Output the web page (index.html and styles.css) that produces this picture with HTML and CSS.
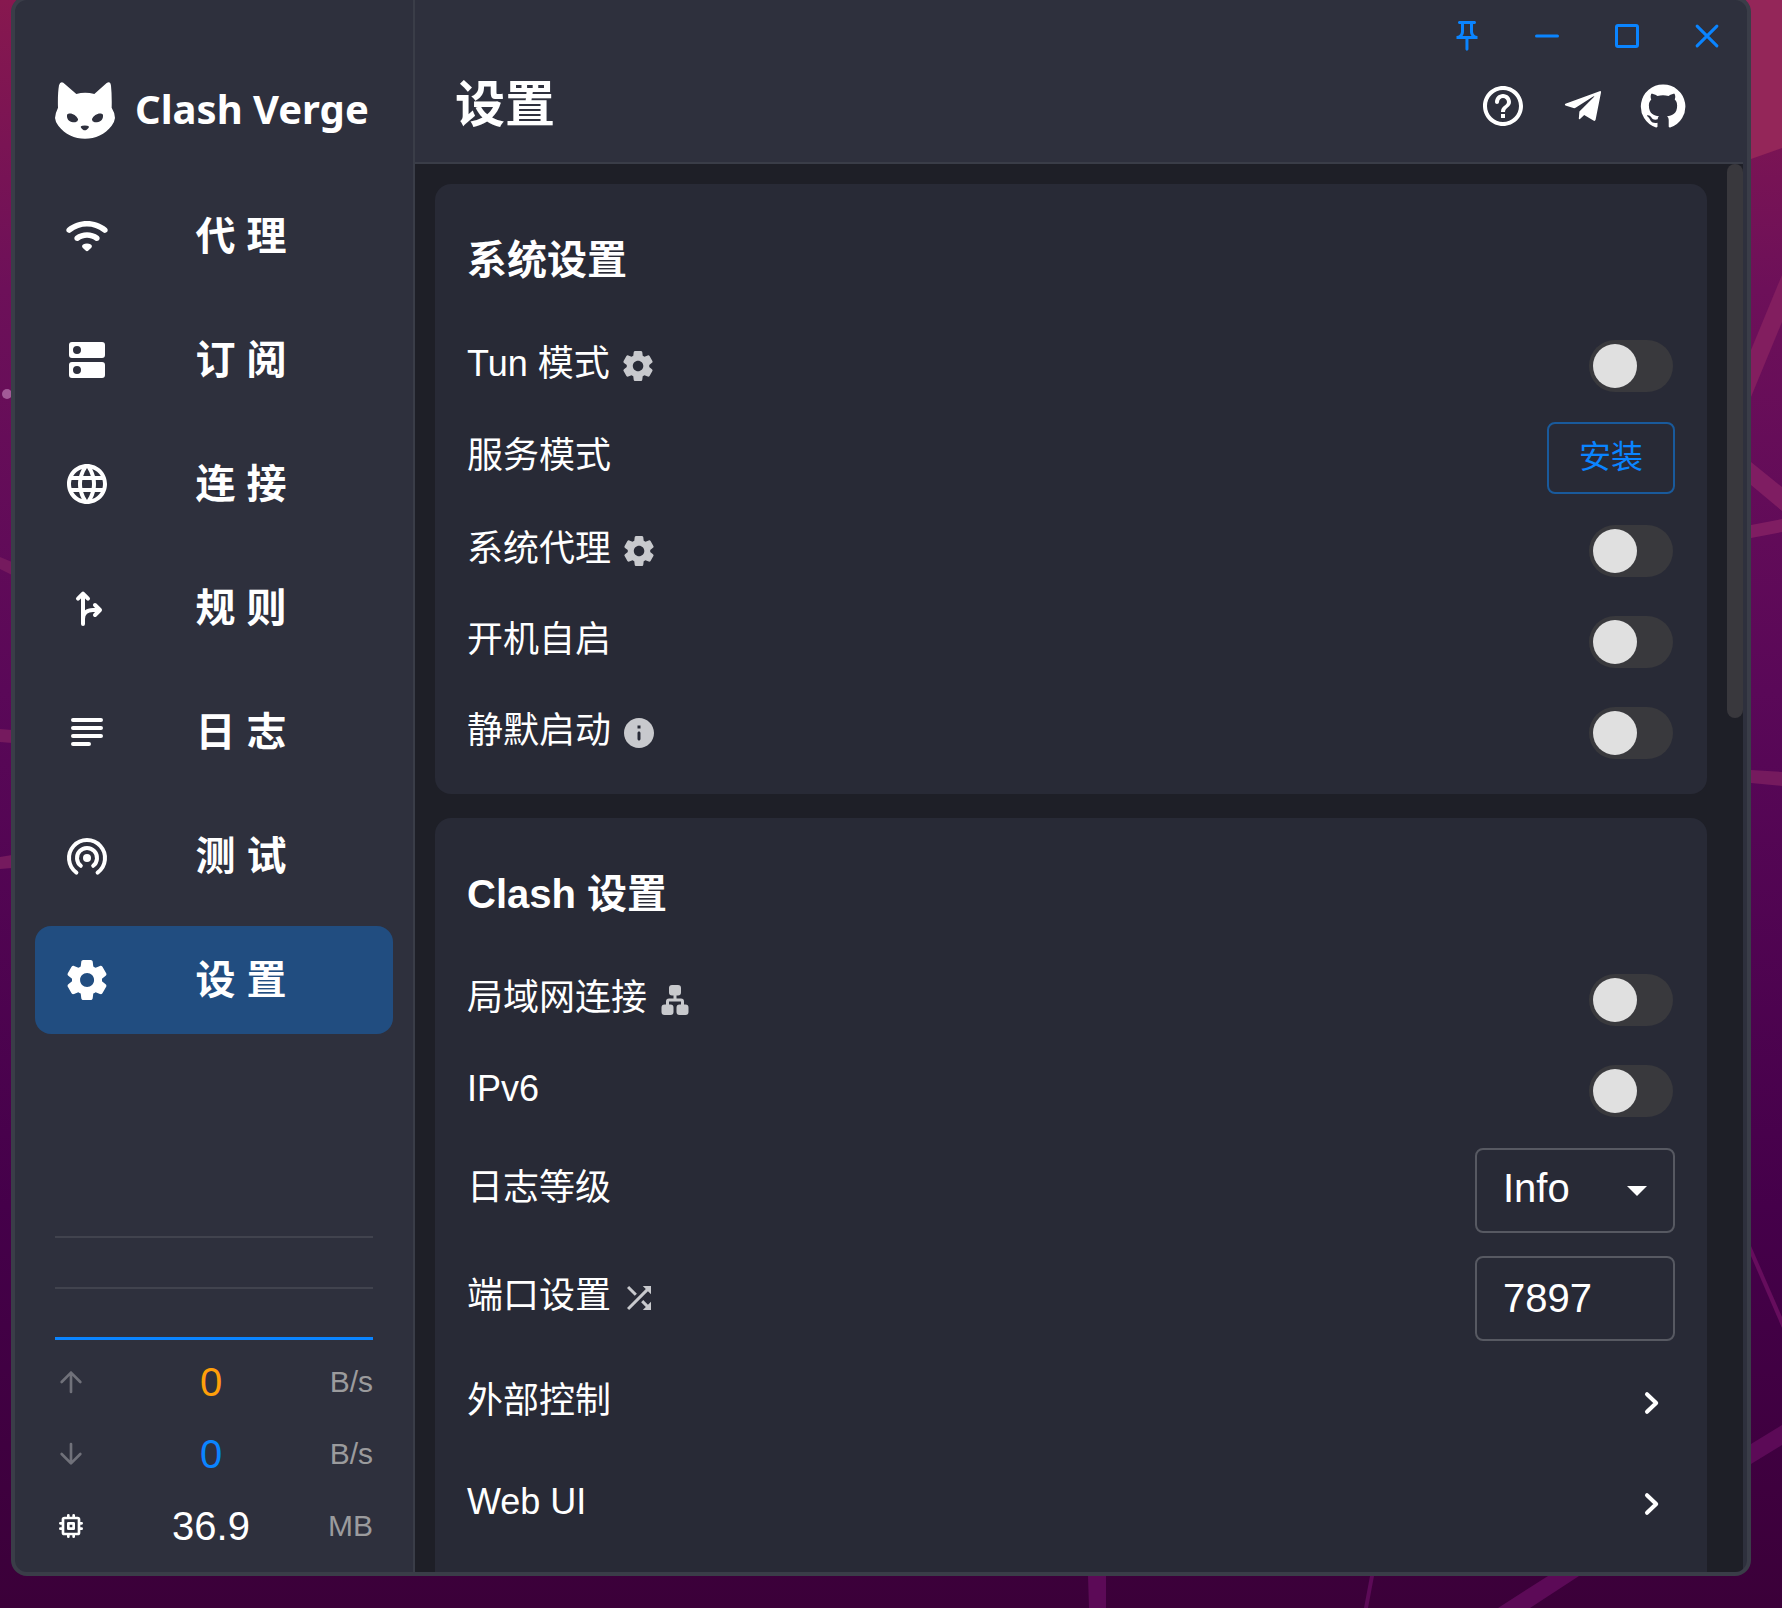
FILE: index.html
```html
<!DOCTYPE html>
<html lang="zh-CN">
<head>
<meta charset="utf-8">
<meta name="viewport" content="width=device-width, initial-scale=1">
<title>Clash Verge</title>
<link rel="stylesheet" href="styles.css">
</head>
<body>
<svg width="0" height="0" class="defs" aria-hidden="true">
  <symbol id="gear" viewBox="0 0 24 24"><path d="M19.5 12c0-.23-.01-.45-.03-.68l1.86-1.41c.4-.3.51-.86.26-1.3l-1.87-3.23c-.25-.44-.79-.62-1.25-.42l-2.15.91c-.37-.26-.76-.49-1.17-.68l-.29-2.31c-.06-.5-.49-.88-.99-.88h-3.73c-.51 0-.94.38-1 .88l-.29 2.31c-.41.19-.8.42-1.17.68l-2.15-.91c-.46-.2-1-.02-1.25.42L2.41 8.62c-.25.44-.14.99.26 1.3l1.86 1.41c-.02.22-.03.44-.03.67s.01.45.03.68l-1.86 1.41c-.4.3-.51.86-.26 1.3l1.87 3.23c.25.44.79.62 1.25.42l2.15-.91c.37.26.76.49 1.17.68l.29 2.31c.06.5.49.88.99.88h3.73c.5 0 .93-.38.99-.88l.29-2.31c.41-.19.8-.42 1.17-.68l2.15.91c.46.2 1 .02 1.25-.42l1.87-3.23c.25-.44.14-.99-.26-1.3l-1.86-1.41c.03-.23.04-.45.04-.68m-7.46 3.5c-1.93 0-3.5-1.57-3.5-3.5s1.57-3.5 3.5-3.5 3.5 1.57 3.5 3.5-1.57 3.5-3.5 3.5"/></symbol>
  <symbol id="chevron" viewBox="0 0 24 24"><path d="M10 7.6 14.6 12 10 16.4" fill="none" stroke="currentColor" stroke-width="2" stroke-linecap="round" stroke-linejoin="round"/></symbol>
</svg>

<svg class="wallpaper" viewBox="0 0 1782 1608" preserveAspectRatio="none" aria-hidden="true">
  <path fill="#942659" d="M1700 0h82v148l-82 29z"/>
  <path fill="#821e5f" d="M1751 350l31-75v47l-31 75z"/>
  <path fill="#7f1d62" d="M1751 462l31 25v24l-31-26zM1751 525l31-6v13l-31 6z"/>
  <path fill="#751a5e" d="M1751 770l31 2v14l-31-3zM0 557l12 5v13l-12-6zM0 729l12 1v13l-12-1zM0 857l12-2v13l-12 1z"/>
  <path fill="#660d5d" d="M1751 1246l31 71v11l-31-72z"/>
  <path fill="#5c0a57" d="M1751 1444l31-19v20l-31 19zM1548 1576h31l-49 32h-32zM1370 1576h4l-6 32h-4zM1088 1576h18v32h-17z"/>
  <circle cx="7" cy="394" r="5" fill="#a25a97"/>
</svg>

<div class="window">
  <aside class="sidebar">
    <div class="brand">
      <svg class="brand-mark" viewBox="165 245 180 171" aria-hidden="true"><path fill="currentColor" fill-rule="evenodd" d="M174 322C173 300 174 272 177 255Q180 243 190 247L229 281Q255 273 283 281L320 248Q331 241 333 256Q336 285 335 322Q345 338 345 353Q344 364 335 376C315 402 286 415 255 415C224 415 195 402 175 376Q166 365 165 353Q166 338 174 322ZM201 345C200 360 212 367 226 366Q235 364 234 356C229 345 216 337 205 340Q201 341 201 345ZM309 345C310 360 298 367 284 366Q275 364 276 356C281 345 294 337 305 340Q309 341 309 345ZM242 380Q242 377 247 376Q255 375 262 376Q267 377 267 380Q266 384 260 388Q254 391 249 388Q243 384 242 380Z"/></svg>
      <span>Clash Verge</span>
    </div>
    <nav class="menu">
      <a href="#proxies"><svg viewBox="0 0 24 24"><path d="M2.06 10.06c.51.51 1.32.56 1.87.1 4.67-3.84 11.45-3.84 16.13-.01.56.46 1.38.42 1.89-.09.59-.59.55-1.57-.1-2.1-5.71-4.67-13.97-4.67-19.69 0-.65.52-.7 1.5-.1 2.1m7.76 7.76 1.47 1.47c.39.39 1.02.39 1.41 0l1.47-1.47c.47-.47.37-1.28-.23-1.59-1.22-.63-2.68-.63-3.91 0-.57.31-.68 1.12-.21 1.59m-3.73-3.73c.49.49 1.26.54 1.83.13 2.44-1.73 5.72-1.73 8.16 0 .57.4 1.34.36 1.83-.13l.01-.01c.6-.6.56-1.62-.13-2.11-3.44-2.49-8.13-2.49-11.58 0-.69.5-.73 1.51-.12 2.12"/></svg><span>代 理</span></a>
      <a href="#profiles"><svg viewBox="0 0 24 24"><path fill-rule="evenodd" d="M4.500 3h15A1.500 1.500 0 0 1 21 4.500v5a1.500 1.500 0 0 1-1.500 1.500h-15A1.500 1.500 0 0 1 3 9.500v-5A1.500 1.500 0 0 1 4.500 3M7 5a2 2 0 1 0 0 4 2 2 0 0 0 0-4M4.500 13h15a1.500 1.500 0 0 1 1.500 1.500v5a1.500 1.500 0 0 1-1.500 1.500h-15A1.500 1.500 0 0 1 3 19.500v-5A1.500 1.500 0 0 1 4.500 13M7 15a2 2 0 1 0 0 4 2 2 0 0 0 0-4"/></svg><span>订 阅</span></a>
      <a href="#connections"><svg viewBox="0 0 24 24"><path d="M11.99 2C6.47 2 2 6.480 2 12s4.470 10 9.990 10C17.520 22 22 17.520 22 12S17.520 2 11.990 2m6.930 6h-2.950c-.32-1.250-.78-2.450-1.380-3.560 1.840.63 3.370 1.910 4.330 3.560M12 4.040c.83 1.200 1.480 2.530 1.910 3.960h-3.820c.43-1.430 1.080-2.760 1.910-3.960M4.260 14C4.100 13.360 4 12.690 4 12s.1-1.360.26-2h3.380c-.08.66-.14 1.320-.14 2s.06 1.340.14 2zm.82 2h2.950c.32 1.250.78 2.450 1.380 3.560-1.840-.63-3.370-1.900-4.330-3.560m2.950-8H5.080c.96-1.660 2.490-2.930 4.330-3.560C8.810 5.550 8.350 6.750 8.030 8M12 19.960c-.83-1.200-1.480-2.530-1.910-3.960h3.820c-.43 1.430-1.080 2.760-1.910 3.960M14.340 14H9.660c-.09-.66-.16-1.320-.16-2s.07-1.350.16-2h4.680c.09.65.16 1.320.16 2s-.07 1.340-.16 2m.25 5.560c.6-1.110 1.060-2.310 1.380-3.560h2.950c-.96 1.650-2.490 2.930-4.330 3.560M16.360 14c.08-.66.14-1.320.14-2s-.06-1.340-.14-2h3.380c.16.64.26 1.310.26 2s-.1 1.360-.26 2z"/></svg><span>连 接</span></a>
      <a href="#rules"><svg viewBox="0 0 24 24"><path class="line" d="M10 20V5M7.500 7.300 10 4.800l2.500 2.500M10 17.500c0-3 2-4.500 5-4.500h3M16 10.500l2.500 2.500-2.500 2.500"/></svg><span>规 则</span></a>
      <a href="#logs"><svg viewBox="0 0 24 24"><path class="line" d="M5 6h14M5 10h14M5 14h14M5 18h8"/></svg><span>日 志</span></a>
      <a href="#test"><svg viewBox="0 0 24 24"><circle cx="12" cy="13" r="2"/><path class="line" d="M6.700 20.300a9 9 0 1 1 10.600 0M8.900 16.900a5 5 0 1 1 6.200 0"/></svg><span>测 试</span></a>
      <a href="#settings" class="active" aria-current="page"><svg><use href="#gear"/></svg><span>设 置</span></a>
    </nav>
    <div class="traffic">
      <div class="graph"></div>
      <div class="stat up"><svg viewBox="0 0 24 24"><path class="line" d="M12 19.500V5M5 12l7-7 7 7"/></svg><span class="value">0</span><span class="unit">B/s</span></div>
      <div class="stat down"><svg viewBox="0 0 24 24"><path class="line" d="M12 4.500V19M5 12l7 7 7-7"/></svg><span class="value">0</span><span class="unit">B/s</span></div>
      <div class="stat memory"><svg viewBox="0 0 24 24"><path class="line" d="M7 6h10a1 1 0 0 1 1 1v10a1 1 0 0 1-1 1H7a1 1 0 0 1-1-1V7a1 1 0 0 1 1-1zM10 10h4v4h-4zM10 4v2M14 4v2M10 18v2M14 18v2M4 10h2M4 14h2M18 10h2M18 14h2"/></svg><span class="value">36.9</span><span class="unit">MB</span></div>
    </div>
  </aside>

  <main class="content">
    <header class="header">
      <div class="window-controls">
        <button type="button" aria-label="置顶"><svg viewBox="0 0 24 24"><path d="M14 4v5c0 1.120.37 2.160 1 3H9c.65-.86 1-1.900 1-3V4zm3-2H7c-.55 0-1 .45-1 1s.45 1 1 1h1v5c0 1.660-1.340 3-3 3v2h5.970v7l1 1 1-1v-7H19v-2c-1.660 0-3-1.340-3-3V4h1c.55 0 1-.45 1-1s-.45-1-1-1"/></svg></button>
        <button type="button" aria-label="最小化"><svg viewBox="0 0 24 24"><path class="line" d="M5 12h14"/></svg></button>
        <button type="button" aria-label="最大化"><svg viewBox="0 0 24 24"><rect class="line" x="5" y="5" width="14" height="14" rx="1"/></svg></button>
        <button type="button" aria-label="关闭"><svg viewBox="0 0 24 24"><path class="line" d="M5.400 5.400l13.200 13.200M18.600 5.400 5.400 18.600"/></svg></button>
      </div>
      <div class="title-row">
        <h1>设置</h1>
        <div class="links">
          <a href="#help" aria-label="帮助"><svg viewBox="0 0 24 24"><path d="M11 18h2v-2h-2zm1-16C6.480 2 2 6.480 2 12s4.480 10 10 10 10-4.480 10-10S17.520 2 12 2m0 18c-4.410 0-8-3.590-8-8s3.590-8 8-8 8 3.590 8 8-3.590 8-8 8m0-14c-2.210 0-4 1.790-4 4 0 .55.45 1 1 1s1-.45 1-1c0-1.100.9-2 2-2s2 .9 2 2c0 2-3 1.750-3 5h2c0-2.250 3-2.500 3-5 0-2.210-1.790-4-4-4"/></svg></a>
          <a href="#telegram" aria-label="Telegram"><svg viewBox="0 0 24 24"><path d="M3.200 10.900 20.300 4.600Q21.100 4.400 21 5.200L18.300 18.900Q18 19.800 17.200 19.300L12.600 16.500 10.500 18.500Q10 18.900 9.900 18.300L10.200 14.700 17.700 7.300Q17.700 6.900 17.100 7.200L8.300 12.900Q7.800 13.200 7.200 13L3.200 11.700Q2.600 11.300 3.200 10.900Z"/></svg></a>
          <a href="#github" aria-label="GitHub"><svg viewBox="0 0 24 24"><path d="M12 1.270a11 11 0 00-3.480 21.460c.55.09.73-.28.73-.55v-1.840c-3.030.64-3.670-1.460-3.670-1.460-.55-1.290-1.280-1.650-1.280-1.650-.92-.65.1-.65.1-.65 1.100 0 1.730 1.100 1.730 1.100.92 1.650 2.570 1.200 3.210.92a2 2 0 01.64-1.470c-2.470-.27-5.040-1.190-5.040-5.500 0-1.100.46-2.100 1.200-2.840a3.760 3.760 0 010-2.930s.91-.28 3.110 1.100c1.800-.49 3.700-.49 5.500 0 2.100-1.380 3.020-1.100 3.020-1.100a3.760 3.760 0 01.1 2.930c.83.74 1.200 1.740 1.200 2.940 0 4.210-2.570 5.130-5.040 5.400.45.37.82.92.82 2.020v3.030c0 .27.1.64.73.55A11 11 0 0012 1.270"/></svg></a>
        </div>
      </div>
    </header>

    <div class="scroll-area">
      <div class="scrollbar"></div>
      <section class="card">
        <h2>系统设置</h2>
        <div class="row"><label for="tun">Tun 模式</label><svg class="hint"><use href="#gear"/></svg><input class="switch" type="checkbox" role="switch" id="tun"></div>
        <div class="row action"><span class="label">服务模式</span><button type="button" class="outlined">安装</button></div>
        <div class="row"><label for="sysproxy">系统代理</label><svg class="hint"><use href="#gear"/></svg><input class="switch" type="checkbox" role="switch" id="sysproxy"></div>
        <div class="row"><label for="autostart">开机自启</label><input class="switch" type="checkbox" role="switch" id="autostart"></div>
        <div class="row"><label for="silent">静默启动</label><svg class="hint" viewBox="0 0 24 24"><path d="M12 2C6.480 2 2 6.480 2 12s4.480 10 10 10 10-4.480 10-10S17.520 2 12 2m0 15c-.55 0-1-.45-1-1v-4c0-.55.45-1 1-1s1 .45 1 1v4c0 .55-.45 1-1 1m1-8h-2V7h2z"/></svg><input class="switch" type="checkbox" role="switch" id="silent"></div>
      </section>

      <section class="card">
        <h2>Clash 设置</h2>
        <div class="row"><label for="lan">局域网连接</label><svg class="hint" viewBox="0 0 24 24"><path d="M10 2h4a2 2 0 0 1 2 2v3a2 2 0 0 1-2 2h-1v2h3a2 2 0 0 1 2 2v2h1a2 2 0 0 1 2 2v3a2 2 0 0 1-2 2h-4a2 2 0 0 1-2-2v-3a2 2 0 0 1 2-2h1v-2H8v2h1a2 2 0 0 1 2 2v3a2 2 0 0 1-2 2H5a2 2 0 0 1-2-2v-3a2 2 0 0 1 2-2h1v-2a2 2 0 0 1 2-2h3V9h-1a2 2 0 0 1-2-2V4a2 2 0 0 1 2-2"/></svg><input class="switch" type="checkbox" role="switch" id="lan"></div>
        <div class="row"><label for="ipv6">IPv6</label><input class="switch" type="checkbox" role="switch" id="ipv6"></div>
        <div class="row tall"><label for="loglevel">日志等级</label><div class="select"><select id="loglevel" class="field"><option>Info</option></select><svg viewBox="0 0 24 24"><path d="M7 10l5 5 5-5z"/></svg></div></div>
        <div class="row tall"><label for="port">端口设置</label><svg class="hint" viewBox="0 0 24 24"><path d="M10.590 9.170 5.410 4 4 5.410l5.170 5.170zM14.500 4l2.040 2.040L4 18.590 5.410 20 17.960 7.460 20 9.500V4zm.33 9.410-1.410 1.410 3.130 3.130L14.500 20H20v-5.500l-2.040 2.040z"/></svg><input class="field" type="text" id="port" value="7897"></div>
        <button type="button" class="row nav-row"><span class="label">外部控制</span><svg><use href="#chevron"/></svg></button>
        <button type="button" class="row nav-row"><span class="label">Web UI</span><svg><use href="#chevron"/></svg></button>
      </section>
    </div>
  </main>
</div>
</body>
</html>
```

FILE: styles.css
```css
* { box-sizing: border-box; }

:root {
  --panel: #2e303d;
  --surface: #1e1f27;
  --card: #282a36;
  --line: #3a3d48;
  --primary: #0a84ff;
}

body {
  margin: 0;
  height: 100vh;
  overflow: hidden;
  color: #fff;
  font-family: "Liberation Sans", "Noto Sans CJK SC", sans-serif;
  background: linear-gradient(#87184f 0, #6d1059 18%, #5a0858 43%, #45004a 75%, #3b0039 100%);
}

button, input, select { font: inherit; color: inherit; }
button { padding: 0; border: 0; background: none; }
a { color: inherit; text-decoration: none; }
svg { display: block; flex: none; fill: currentColor; }
h1, h2 { margin: 0; font-weight: 700; }

.line {
  fill: none;
  stroke: currentColor;
  stroke-width: 2;
  stroke-linecap: round;
  stroke-linejoin: round;
}

.defs { position: absolute; }
.wallpaper { position: absolute; inset: 0; width: 100%; height: 100%; }

.window {
  position: relative;
  display: flex;
  height: calc(100vh - 28px);
  margin: -4px 31px 32px 11px;
  padding-right: 4px;
  overflow: hidden;
  background: var(--panel);
  border: 4px solid var(--line);
  border-radius: 16px;
}

/* Sidebar */
.sidebar {
  display: flex;
  flex: none;
  flex-direction: column;
  width: 400px;
  border-right: 2px solid var(--line);
}

.brand {
  display: flex;
  align-items: center;
  gap: 20px;
  height: 174px;
  padding: 46px 0 0 40px;
  font: 700 40px/56px "Noto Sans", sans-serif;
}
.brand-mark { width: 60px; height: 57px; }
.brand span { padding-bottom: 2px; }

.menu { display: flex; flex-direction: column; gap: 16px; padding: 8px 20px; }
.menu a {
  display: flex;
  align-items: center;
  height: 108px;
  padding: 0 28px;
  border-radius: 16px;
  font-size: 40px;
  line-height: 60px;
  font-weight: 700;
}
.menu svg { width: 48px; height: 48px; }
.menu span { flex: 1; padding-left: 6px; text-align: center; }
.menu .active { background: #214d80; }

.traffic { margin-top: auto; padding: 0 40px 10px; }
.graph {
  height: 104px;
  margin-bottom: 6px;
  border-top: 2px solid #41434e;
  border-bottom: 3px solid var(--primary);
  background: linear-gradient(#41434e, #41434e) 0 49px / 100% 2px no-repeat;
}
.stat { display: flex; align-items: center; height: 72px; font-size: 40px; }
.stat svg { width: 32px; height: 32px; margin-right: 16px; color: #70717a; }
.stat .value { flex: 1; text-align: center; }
.stat .unit { width: 54px; font-size: 30px; text-align: right; color: #9b9b9d; }
.up .value { color: #ff9f0a; }
.down .value { color: var(--primary); }
.stat.memory svg { color: #fff; }

/* Main column */
.content { display: flex; flex: 1; flex-direction: column; min-width: 0; }
.header { flex: none; padding-bottom: 22px; border-bottom: 2px solid var(--line); }

.window-controls { display: flex; justify-content: flex-end; gap: 8px; height: 72px; color: var(--primary); }
.window-controls button { display: grid; place-items: center; width: 72px; }
.window-controls svg { width: 36px; height: 36px; }

.title-row { display: flex; align-items: center; justify-content: space-between; height: 68px; padding: 0 40px; }
.title-row h1 { padding-bottom: 2px; font-size: 50px; line-height: 66px; }
.links { display: flex; }
.links a { display: grid; place-items: center; width: 80px; height: 68px; }
.links svg { width: 48px; height: 48px; }

.scroll-area {
  position: relative;
  display: flex;
  flex: 1;
  flex-direction: column;
  gap: 24px;
  min-height: 0;
  padding: 20px 36px 0 20px;
  overflow: hidden;
  background: var(--surface);
}
.scrollbar {
  position: absolute;
  top: 0;
  right: 0;
  width: 16px;
  height: 554px;
  border-radius: 8px;
  background: #39383d;
}

.card { flex: none; padding: 16px 32px; border-radius: 16px; background: var(--card); }
.card:last-child { flex: 1 0 auto; border-radius: 16px 16px 0 0; }
.card h2 { font-size: 40px; line-height: 120px; }

.row { display: flex; align-items: center; width: 100%; height: 91px; gap: 10px; font-size: 36px; line-height: 54px; }
.row > :last-child { margin-left: auto; }
.row label, .row .label { padding-bottom: 4px; }
.row.action { height: 94px; }
.row.tall { height: 108px; }
.row.nav-row { height: 101px; text-align: left; }
.hint { width: 36px; height: 36px; color: #c8c9cd; }
.nav-row svg { width: 48px; height: 48px; }

.switch {
  flex: none;
  width: 84px;
  height: 52px;
  margin: 0 2px;
  padding: 4px;
  appearance: none;
  border-radius: 26px;
  background: #39393d;
}
.switch::before {
  display: block;
  width: 44px;
  height: 44px;
  border-radius: 50%;
  background: #e0e0e0;
  content: "";
}
.switch:checked { background: var(--primary); }
.switch:checked::before { margin-left: auto; }

.outlined {
  width: 128px;
  height: 72px;
  padding-bottom: 2px;
  border: 2px solid #195a9c;
  border-radius: 8px;
  font-size: 32px;
  line-height: 54px;
  color: var(--primary);
}

.field {
  width: 200px;
  height: 85px;
  padding: 0 26px;
  appearance: none;
  border: 2px solid #575962;
  border-radius: 8px;
  background: transparent;
  font-size: 40px;
}
.select { position: relative; height: 85px; }
.select .field { display: block; padding-bottom: 4px; }
.select svg { position: absolute; top: 18px; right: 14px; width: 48px; height: 48px; pointer-events: none; }
```
